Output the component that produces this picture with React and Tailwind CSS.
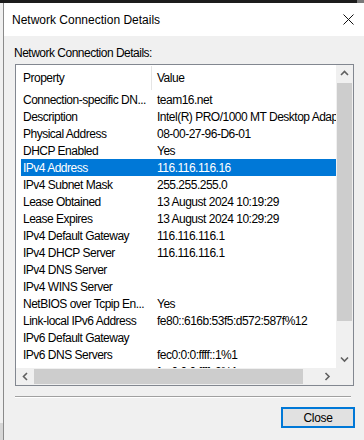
import React from "react";

const rows = [
  ["Connection-specific DN...", "team16.net"],
  ["Description", "Intel(R) PRO/1000 MT Desktop Adapter"],
  ["Physical Address", "08-00-27-96-D6-01"],
  ["DHCP Enabled", "Yes"],
  ["IPv4 Address", "116.116.116.16", true],
  ["IPv4 Subnet Mask", "255.255.255.0"],
  ["Lease Obtained", "13 August 2024 10:19:29"],
  ["Lease Expires", "13 August 2024 10:29:29"],
  ["IPv4 Default Gateway", "116.116.116.1"],
  ["IPv4 DHCP Server", "116.116.116.1"],
  ["IPv4 DNS Server", ""],
  ["IPv4 WINS Server", ""],
  ["NetBIOS over Tcpip En...", "Yes"],
  ["Link-local IPv6 Address", "fe80::616b:53f5:d572:587f%12"],
  ["IPv6 Default Gateway", ""],
  ["IPv6 DNS Servers", "fec0:0:0:ffff::1%1"],
  ["", "fec0:0:0:ffff::2%1"],
];

function Chevron({ dir }) {
  const pts = {
    up: "1,5 4.5,1.5 8,5",
    down: "1,1.5 4.5,5 8,1.5",
    left: "5,1 1.5,4.5 5,8",
    right: "1.5,1 5,4.5 1.5,8",
  }[dir];
  const vert = dir === "up" || dir === "down";
  return (
    <svg width={vert ? 9 : 7} height={vert ? 7 : 9} viewBox={vert ? "0 0 9 7" : "0 0 7 9"}>
      <polyline points={pts} fill="none" stroke="#606060" strokeWidth="1.6" />
    </svg>
  );
}

export default function App() {
  return (
    <div className="w-[364px] h-[440px] bg-[#f0f0f0] overflow-hidden flex flex-col font-['Liberation_Sans',Arial,sans-serif] text-black">
      <div className="h-[3px] flex shrink-0">
        <div className="flex-1 bg-[#1c1c1c]" />
        <div className="w-[7px] bg-[#7a7a7a]" />
      </div>
      <div className="flex flex-1">
        <div className="w-[3px] flex flex-col">
          <div className="flex-1 bg-[#f0f0f0]" />
          <div className="h-[17px] bg-[#d6d6d6]" />
        </div>
        <div className="flex-1 flex flex-col border-l border-[#8a8a8a]">
          <div className="h-[33px] bg-white flex items-center justify-between pl-[8px] pr-[10px]">
            <span className="text-[12px] leading-[16px]">Network Connection Details</span>
            <svg width="11" height="11" viewBox="0 0 11 11">
              <path d="M0.5 0.5L10.5 10.5M10.5 0.5L0.5 10.5" stroke="#111" strokeWidth="1" />
            </svg>
          </div>
          <div className="mt-[9px] pl-[10px] text-[12px] leading-[16px] tracking-[-0.5px]">
            Network Connection Details:
          </div>
          <div className="mt-[3px] ml-[11px] w-[339px] h-[322px] border border-[#828790] bg-white flex text-[12px] tracking-[-0.5px]">
            <div className="w-[320px] flex flex-col">
              <div className="h-[26px] flex items-stretch shrink-0">
                <div className="w-[135px] pl-[7px] flex items-center">Property</div>
                <div className="w-px my-[1px] bg-[#e5e5e5]" />
                <div className="pl-[5px] flex items-center">Value</div>
              </div>
              <div className="h-[277px] overflow-hidden">
                {rows.map(([k, v, sel], i) => (
                  <div
                    key={i}
                    className={
                      "ml-[5px] h-[17px] flex items-center whitespace-nowrap " +
                      (sel ? "bg-[#0078d7] text-white" : "")
                    }
                  >
                    <div className="w-[130px] pl-[2px] overflow-hidden shrink-0">{k}</div>
                    <div className="pl-[6px]">{v}</div>
                  </div>
                ))}
              </div>
              <div className="h-[17px] flex bg-[#f0f0f0] shrink-0">
                <div className="w-[18px] flex items-center justify-center">
                  <Chevron dir="left" />
                </div>
                <div className="w-[269px] my-[1px] bg-[#cdcdcd]" />
                <div className="flex-1 flex items-center justify-end pr-[5px]">
                  <Chevron dir="right" />
                </div>
              </div>
            </div>
            <div className="w-[17px] flex flex-col">
              <div className="h-[303px] bg-[#f0f0f0] flex flex-col">
                <div className="h-[17px] flex items-center justify-center">
                  <Chevron dir="up" />
                </div>
                <div className="mt-[1px] mx-[1px] h-[238px] bg-[#cdcdcd]" />
                <div className="flex-1" />
                <div className="h-[17px] flex items-center justify-center">
                  <Chevron dir="down" />
                </div>
              </div>
              <div className="flex-1 bg-[#f0f0f0]" />
            </div>
          </div>
          <div className="mt-[10px] ml-[11px] w-[336px] h-px bg-[#a0a0a0]" />
          <div className="ml-[11px] w-[336px] h-px bg-white" />
          <div className="mt-[9px] ml-[277px] w-[74px] h-[21px] border-2 border-[#0078d7] bg-[#e1e1e1] flex items-center justify-center text-[12px] tracking-[-0.3px]">
            Close
          </div>
        </div>
      </div>
    </div>
  );
}
